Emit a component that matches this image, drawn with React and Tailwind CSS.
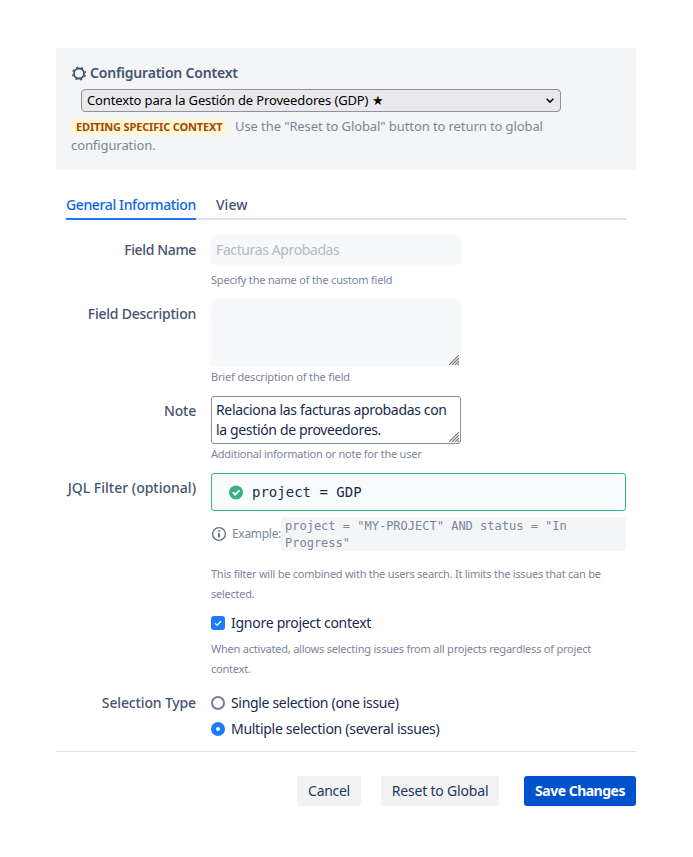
import { useState } from "react"

const ResizeGrip = () => (
  <svg className="absolute right-[2px] bottom-[2px] w-[10px] h-[10px] pointer-events-none" viewBox="0 0 10 10" fill="none" stroke="#77777a" strokeWidth="1.1">
    <path d="M0 10L10 0M3 10L10 3M6 10L10 6M8.6 10L10 8.6" />
  </svg>
)

const Row = ({ label, labelClass, children }) => (
  <div className="flex gap-[15px]">
    <div className="w-[140px] h-[30px] flex items-center justify-end shrink-0 font-medium text-[#44546f] whitespace-nowrap">
      <span className={labelClass}>{label}</span>
    </div>
    <div className="w-[415px]">{children}</div>
  </div>
)

const Hint = ({ className, children }) => (
  <div className={`text-[11px] leading-5 text-[#7a869a] whitespace-nowrap ${className}`}>{children}</div>
)

const Radio = ({ checked, onChange, className, children }) => (
  <label className="flex items-center gap-[6px] h-[26px]">
    <input type="radio" name="selection" checked={checked} onChange={onChange} className="sr-only" />
    {checked ? (
      <span className="w-[14px] h-[14px] rounded-full bg-[#1d7afc] flex items-center justify-center">
        <span className="w-1 h-1 rounded-full bg-white" />
      </span>
    ) : (
      <span className="w-[14px] h-[14px] rounded-full border-2 border-[#758195] bg-white" />
    )}
    <span className={className}>{children}</span>
  </label>
)

const App = () => {
  const [ignoreContext, setIgnoreContext] = useState(true)
  const [selection, setSelection] = useState("multiple")

  return (
    <div className="min-h-[857px] bg-white px-[56px] pt-12 pr-[57px] text-[14px] leading-5 text-[#172b4d] font-['Noto_Sans',sans-serif]">
      <section className="h-[122px] rounded-[3px] bg-[#f4f5f7] pt-[15px] pl-[15px]">
        <h2 className="flex items-center gap-1 h-5 font-semibold text-[#44546f]">
          <svg className="w-[15px] h-[15px]" viewBox="0 0 15 15" fill="none" stroke="currentColor">
            <circle cx="8" cy="7.5" r="5" strokeWidth="1.8" />
            <circle cx="8" cy="7.5" r="6.4" strokeWidth="1.4" strokeDasharray="2.1 2.927" strokeDashoffset="-1.46" />
          </svg>
          <span className="tracking-[-0.19px]">Configuration Context</span>
        </h2>
        <div className="relative ml-[10px] mt-[6px] w-[480px] h-[23px]">
          <select className="block appearance-none w-full h-full pl-[5px] rounded-[4px] border border-[#8f8f9d] bg-[#e9e9ed] text-[13px] leading-[19px] tracking-[-0.13px] text-black">
            <option>Contexto para la Gestión de Proveedores (GDP) ★</option>
          </select>
          <svg className="absolute right-[7px] top-[9px] w-2 h-[6px] pointer-events-none" viewBox="0 0 8 6" fill="none" stroke="#000" strokeWidth="1.6">
            <path d="M.7 .8L4 4.2 7.3 .8" />
          </svg>
        </div>
        <div className="mt-[5px] text-[13px] leading-[19px] tracking-[-0.09px] text-[#7a869a] whitespace-nowrap">
          <div className="flex items-center gap-2 h-[19px]">
            <span className="h-4 w-[156px] pl-[5px] rounded-[3px] bg-[#fff7d6] text-[11px] leading-4 tracking-[-0.16px] font-bold text-[#a54800]">EDITING SPECIFIC CONTEXT</span>
            <span>Use the "Reset to Global" button to return to global</span>
          </div>
          <div>configuration.</div>
        </div>
      </section>

      <nav className="flex gap-5 mx-[10px] mt-[25px] h-[25px] border-b-2 border-[#dcdfe4] font-medium text-[#44546f]">
        <a className="w-[130px] h-[25px] border-b-2 border-[#1d7afc] text-[#0c66e4] whitespace-nowrap tracking-[-0.38px]">General Information</a>
        <a>View</a>
      </nav>

      <main>
        <div className="h-16 pt-[15px]">
          <Row label="Field Name" labelClass="tracking-[-0.36px]">
            <input disabled defaultValue="Facturas Aprobadas" className="block w-[250px] h-[30px] px-[5px] pb-[2px] rounded-[3px] bg-[#f7f8f9] text-[#b3b9c4] tracking-[-0.39px]" />
            <Hint className="mt-[5px] tracking-[-0.19px]">Specify the name of the custom field</Hint>
          </Row>
        </div>
        <div className="h-[97px] pt-[15px]">
          <Row label="Field Description" labelClass="tracking-[-0.23px]">
            <div className="relative w-[250px] h-[68px]">
              <textarea disabled className="block w-full h-full resize-none rounded-[3px] bg-[#f7f8f9]" />
              <ResizeGrip />
            </div>
            <Hint className="tracking-[-0.16px]">Brief description of the field</Hint>
          </Row>
        </div>
        <div className="h-[77px] pt-[15px]">
          <Row label="Note" labelClass="tracking-[-0.2px]">
            <div className="relative w-[250px] h-12">
              <textarea defaultValue={"Relaciona las facturas aprobadas con\nla gestión de proveedores."} className="block w-full h-full resize-none overflow-hidden whitespace-pre px-1 pt-[3px] rounded-[3px] border border-[#8590a2] bg-white tracking-[-0.35px]" />
              <ResizeGrip />
            </div>
            <Hint className="tracking-[-0.24px]">Additional information or note for the user</Hint>
          </Row>
        </div>
        <div className="h-[215px] pt-[15px]">
          <Row label="JQL Filter (optional)">
            <div className="flex items-center gap-2 h-[38px] pl-[17px] rounded-[3px] border border-[#36b37e] bg-[#fafbfc] font-['DejaVu_Sans_Mono',monospace]">
              <svg className="w-[15px] h-[15px]" viewBox="0 0 15 15">
                <circle cx="7" cy="7.5" r="7" fill="#36b37e" />
                <path d="M4.3 7.8l2 1.9 3.6-3.8" fill="none" stroke="#fff" strokeWidth="1.9" strokeLinecap="round" strokeLinejoin="round" />
              </svg>
              <span>project = GDP</span>
            </div>
            <div className="flex items-center mt-[6px] h-[34px] text-[12px] text-[#7a869a]">
              <svg className="w-4 h-4 shrink-0 mr-[5px]" viewBox="0 0 16 16" fill="none" stroke="#626f86">
                <circle cx="8" cy="8" r="6.4" strokeWidth="1.4" />
                <path d="M8 7.2v4" strokeWidth="2" />
                <circle cx="8" cy="5" r="1" fill="#626f86" stroke="none" />
              </svg>
              <span className="w-[49px] whitespace-nowrap tracking-[-0.3px]">Example:</span>
              <code className="w-[345px] h-[34px] px-1 pt-px rounded-[3px] bg-[#f4f5f7] font-['DejaVu_Sans_Mono',monospace] text-[12px] leading-[17px]">
                project = "MY-PROJECT" AND status = "In Progress"
              </code>
            </div>
            <Hint className="mt-[13px] tracking-[-0.25px]">This filter will be combined with the users search. It limits the issues that can be<br />selected.</Hint>
            <label className="flex items-center gap-[6px] h-5 mt-[9px]">
              <input type="checkbox" checked={ignoreContext} onChange={(e) => setIgnoreContext(e.target.checked)} className="sr-only" />
              <span className={`w-[14px] h-[14px] rounded-[3px] ${ignoreContext ? "bg-[#1d7afc]" : "border-2 border-[#758195]"}`}>
                {ignoreContext && (
                  <svg className="w-[14px] h-[14px]" viewBox="0 0 14 14" fill="none" stroke="#fff" strokeWidth="1.3">
                    <path d="M4 7.2l2.1 2L10.2 5" />
                  </svg>
                )}
              </span>
              <span className="tracking-[-0.27px]">Ignore project context</span>
            </label>
            <Hint className="mt-[6px] tracking-[-0.22px]">When activated, allows selecting issues from all projects regardless of project<br />context.</Hint>
          </Row>
        </div>
        <div className="h-[78px] pt-[15px]">
          <Row label="Selection Type" labelClass="tracking-[-0.15px]">
            <div className="mt-[2px]">
              <Radio checked={selection === "single"} onChange={() => setSelection("single")} className="tracking-[-0.32px]">Single selection (one issue)</Radio>
              <Radio checked={selection === "multiple"} onChange={() => setSelection("multiple")} className="tracking-[-0.28px]">Multiple selection (several issues)</Radio>
            </div>
          </Row>
        </div>
      </main>

      <footer className="flex justify-end border-t border-[#dcdfe4] pt-6 whitespace-nowrap">
        <button className="w-16 h-[30px] rounded-[3px] bg-[#f1f2f4] text-[#253858] tracking-[-0.3px]">Cancel</button>
        <button className="w-[118px] h-[30px] ml-5 rounded-[3px] bg-[#f1f2f4] text-[#253858] tracking-[-0.18px]">Reset to Global</button>
        <button className="w-[112px] h-[30px] ml-[25px] rounded-[3px] bg-[#0052cc] text-white font-bold tracking-[-0.5px]">Save Changes</button>
      </footer>
    </div>
  )
}

export default App
